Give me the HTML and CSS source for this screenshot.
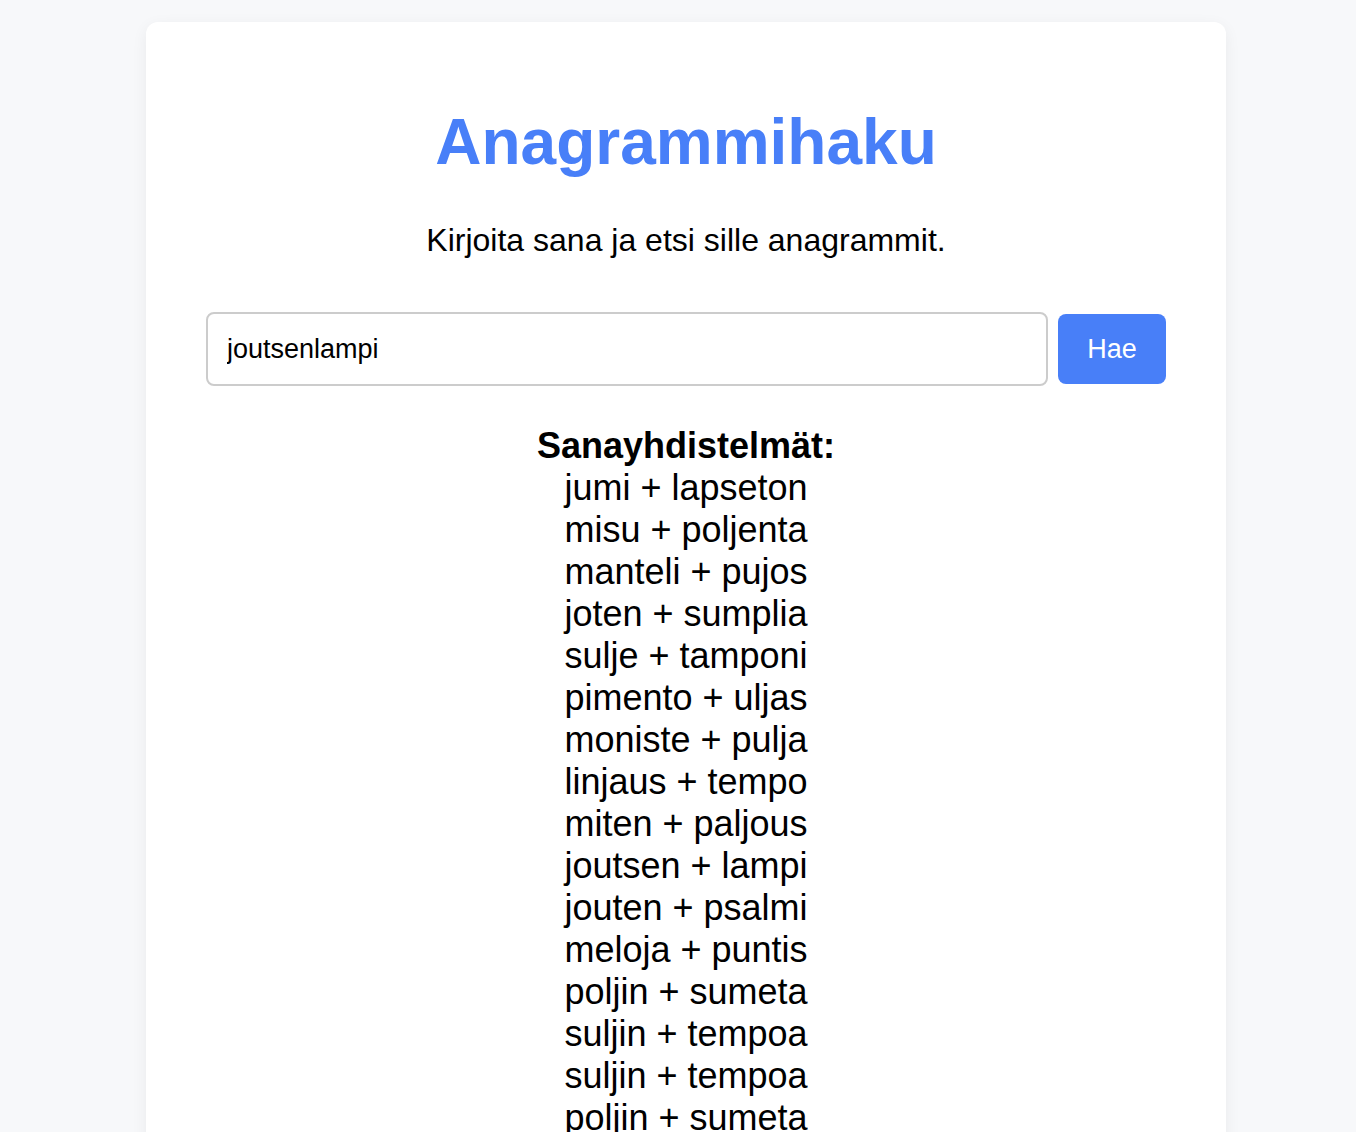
FILE: index.html
```html
<!DOCTYPE html>
<html lang="fi">
<head>
    <meta charset="UTF-8">
    <meta name="viewport" content="width=device-width, initial-scale=1.0">
    <title>Anagrammihaku</title>
    <link rel="stylesheet" href="styles.css">
</head>
<body>

<div class="container">
    <h1>Anagrammihaku</h1>
    <p class="intro">Kirjoita sana ja etsi sille anagrammit.</p>

    <form class="search-form" onsubmit="return false;">
        <input type="text" class="search-input" value="joutsenlampi">
        <button type="submit" class="search-button">Hae</button>
    </form>

    <div class="results">
        <div class="results-title">Sanayhdistelmät:</div>
        <div class="results-list">
            <div class="result-item"><span>jumi</span><span>+</span><span>lapseton</span></div>
            <div class="result-item"><span>misu</span><span>+</span><span>poljenta</span></div>
            <div class="result-item"><span>manteli</span><span>+</span><span>pujos</span></div>
            <div class="result-item"><span>joten</span><span>+</span><span>sumplia</span></div>
            <div class="result-item"><span>sulje</span><span>+</span><span>tamponi</span></div>
            <div class="result-item"><span>pimento</span><span>+</span><span>uljas</span></div>
            <div class="result-item"><span>moniste</span><span>+</span><span>pulja</span></div>
            <div class="result-item"><span>linjaus</span><span>+</span><span>tempo</span></div>
            <div class="result-item"><span>miten</span><span>+</span><span>paljous</span></div>
            <div class="result-item"><span>joutsen</span><span>+</span><span>lampi</span></div>
            <div class="result-item"><span>jouten</span><span>+</span><span>psalmi</span></div>
            <div class="result-item"><span>meloja</span><span>+</span><span>puntis</span></div>
            <div class="result-item"><span>poljin</span><span>+</span><span>sumeta</span></div>
            <div class="result-item"><span>suljin</span><span>+</span><span>tempoa</span></div>
            <div class="result-item"><span>suljin</span><span>+</span><span>tempoa</span></div>
            <div class="result-item"><span>poljin</span><span>+</span><span>sumeta</span></div>
            <div class="result-item"><span>jouten</span><span>+</span><span>psalmi</span></div>
            <div class="result-item"><span>meloja</span><span>+</span><span>puntis</span></div>
        </div>
    </div>
</div>

</body>
</html>
```

FILE: styles.css
```css
body {
    font-family: 'Liberation Sans', Arial, sans-serif;
    background: #f7f8fa;
    color: #000;
    margin: 0;
    padding: 22px 0 22px 16px;
}

.container {
    background: #fff;
    width: 1080px;
    box-sizing: border-box;
    margin: 0 auto;
    padding: 83px 60px 40px;
    border-radius: 12px;
    box-shadow: 0 4px 16px rgba(0, 0, 0, 0.06);
    text-align: center;
}

.container h1 {
    color: #487ff8;
    font-size: 64px;
    font-weight: bold;
    margin: 0 0 43px;
}

.intro {
    font-size: 32px;
    margin: 0 0 53px;
}

.search-form {
    display: flex;
    align-items: center;
    gap: 10px;
    margin-bottom: 39px;
}

.search-input {
    flex: 1;
    height: 74px;
    box-sizing: border-box;
    padding: 0 19px;
    border: 2px solid #cccccc;
    border-radius: 8px;
    font-family: inherit;
    font-size: 27px;
    color: #000;
    outline: none;
}

.search-button {
    width: 108px;
    height: 70px;
    background: #487ff8;
    color: #fff;
    border: none;
    border-radius: 8px;
    font-family: inherit;
    font-size: 27px;
    cursor: pointer;
}

.results {
    font-size: 36px;
    line-height: 42px;
}

.results-title {
    font-weight: bold;
}

.results-list {
    display: grid;
    width: fit-content;
    margin: 0 auto;
}

.result-item {
    display: flex;
    justify-content: space-between;
    gap: 10px;
}
```
